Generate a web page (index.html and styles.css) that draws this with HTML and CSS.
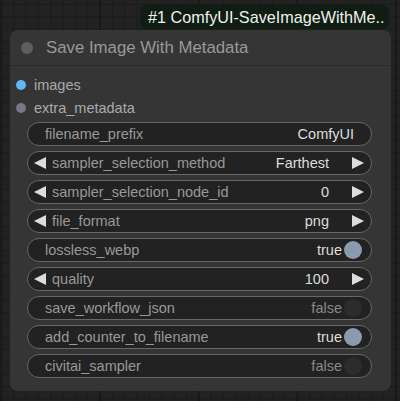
FILE: index.html
```html
<!DOCTYPE html>
<html>
<head>
<meta charset="utf-8">
<link rel="stylesheet" href="styles.css">
</head>
<body>
<div class="canvas">
  <div class="badge-row"><div class="badge">#1 ComfyUI-SaveImageWithMe..</div></div>
  <div class="node">
    <div class="title"><span class="title-dot"></span><span class="title-text">Save Image With Metadata</span></div>
    <div class="inputs">
      <div class="input"><span class="slot blue"></span>images</div>
      <div class="input"><span class="slot gray"></span>extra_metadata</div>
    </div>
    <div class="widgets">
      <div class="w text"><span class="lbl">filename_prefix</span><span class="val">ComfyUI</span></div>
      <div class="w combo"><span class="arr l"></span><span class="lbl">sampler_selection_method</span><span class="val">Farthest</span><span class="arr r"></span></div>
      <div class="w combo"><span class="arr l"></span><span class="lbl">sampler_selection_node_id</span><span class="val">0</span><span class="arr r"></span></div>
      <div class="w combo"><span class="arr l"></span><span class="lbl">file_format</span><span class="val">png</span><span class="arr r"></span></div>
      <div class="w toggle"><span class="lbl">lossless_webp</span><span class="val">true</span><span class="knob on"></span></div>
      <div class="w combo"><span class="arr l"></span><span class="lbl">quality</span><span class="val">100</span><span class="arr r"></span></div>
      <div class="w toggle"><span class="lbl">save_workflow_json</span><span class="val off">false</span><span class="knob"></span></div>
      <div class="w toggle"><span class="lbl">add_counter_to_filename</span><span class="val">true</span><span class="knob on"></span></div>
      <div class="w toggle"><span class="lbl">civitai_sampler</span><span class="val off">false</span><span class="knob"></span></div>
    </div>
  </div>
</div>
</body>
</html>
```
FILE: styles.css
```css
html, body {
  margin: 0;
  padding: 0;
  width: 400px;
  height: 401px;
  overflow: hidden;
}
body {
  background-color: #222222;
  background-image:
    linear-gradient(to right, #181818 2px, transparent 2px),
    linear-gradient(to right, #1b1b1b 1px, transparent 1px),
    linear-gradient(to bottom, #1b1b1b 1px, transparent 1px);
  background-size: 98.7px 98.7px, 12.34px 12.34px, 12.34px 12.34px;
  background-position: 99px 0, 1px 0, 0 4px;
  font-family: "Liberation Sans", Arial, sans-serif;
}
.canvas {
  display: flex;
  flex-direction: column;
  padding: 5px 9px 0 10px;
}
.badge-row {
  display: flex;
  justify-content: flex-end;
  padding-right: 2px;
  height: 25px;
}
.badge {
  background: #0f1d12;
  color: #f0f0f0;
  font-size: 16.2px;
  line-height: 24px;
  height: 24px;
  padding: 0 8px;
  border-radius: 7px;
  width: 233px;
  white-space: nowrap;
}
.node {
  background: #353535;
  border-radius: 8px;
  height: 361px;
  display: flex;
  flex-direction: column;
}
.title {
  height: 35px;
  display: flex;
  align-items: center;
  border-bottom: 1px solid #2a2a2a;
}
.title-dot {
  width: 12px;
  height: 12px;
  border-radius: 50%;
  background: #5e5e5e;
  margin-left: 11px;
  margin-right: 13px;
}
.title-text {
  color: #999999;
  font-size: 16.8px;
}
.inputs {
  display: flex;
  flex-direction: column;
  padding-top: 7px;
}
.input {
  height: 23px;
  display: flex;
  align-items: center;
  color: #aaaaaa;
  font-size: 14.5px;
}
.slot {
  width: 10px;
  height: 10px;
  border-radius: 50%;
  margin-left: 6px;
  margin-right: 8px;
}
.slot.blue { background: #64b5f6; }
.slot.gray { background: #777785; }
.widgets {
  display: flex;
  flex-direction: column;
  gap: 5px;
  padding: 3px 19px 0 17px;
}
.w {
  box-sizing: border-box;
  height: 24px;
  border: 1px solid #676767;
  border-radius: 12px;
  background: #222222;
  display: flex;
  align-items: center;
  font-size: 14.5px;
  padding: 0 17px 0 17px;
}
.lbl {
  color: #999999;
  flex: 1;
  white-space: nowrap;
}
.val {
  color: #dddddd;
}
.val.off {
  color: #888888;
}
.combo {
  padding: 0 7px 0 6px;
}
.combo .lbl { margin-left: 6px; }
.combo .val { margin-right: 23px; }
.arr {
  width: 0;
  height: 0;
  border-top: 6px solid transparent;
  border-bottom: 6px solid transparent;
}
.arr.l { border-right: 12px solid #dddddd; }
.arr.r { border-left: 12px solid #dddddd; }
.toggle {
  padding: 0 9px 0 17px;
}
.knob {
  width: 18px;
  height: 18px;
  border-radius: 50%;
  background: #2c2c2c;
  margin-left: 2px;
}
.knob.on { background: #8a9bb0; }
```
